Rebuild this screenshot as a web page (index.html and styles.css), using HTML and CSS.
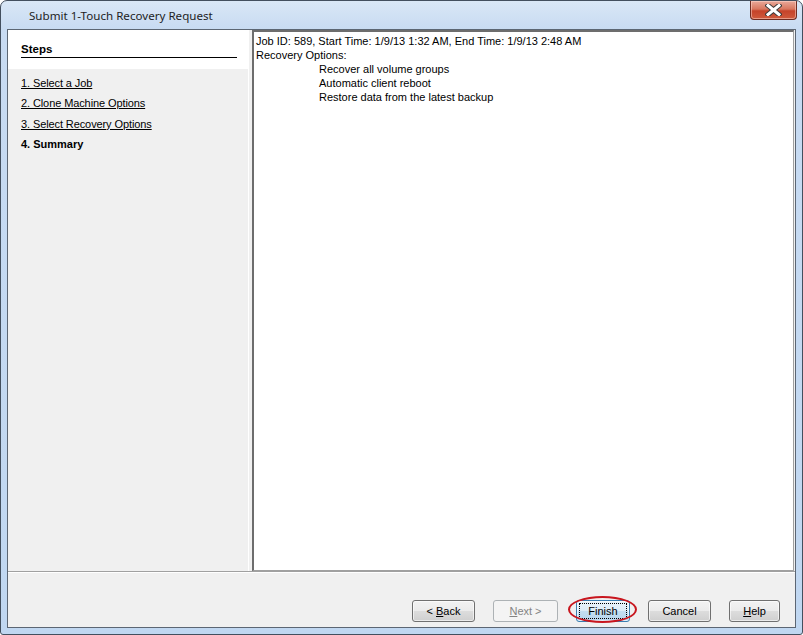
FILE: index.html
```html
<!DOCTYPE html>
<html lang="en">
<head>
  <meta charset="UTF-8">
  <title>Submit 1-Touch Recovery Request</title>
  <link rel="stylesheet" href="styles.css">
</head>
<body>
  <div class="window">
    <div class="titlebar">
      <span class="title">Submit 1-Touch Recovery Request</span>
      <button class="close" title="Close">
        <svg width="17" height="12" viewBox="0 0 17 12">
          <path d="M3 1.5 L14 10.5 M14 1.5 L3 10.5" stroke="#3a3a3a" stroke-width="5" stroke-linecap="square"/>
          <path d="M3 1.5 L14 10.5 M14 1.5 L3 10.5" stroke="#fff" stroke-width="3" stroke-linecap="square"/>
        </svg>
      </button>
    </div>

    <div class="client">
      <div class="main">
        <div class="steps">
          <div class="steps-head">
            <h2>Steps</h2>
          </div>
          <ul class="step-list">
            <li><a href="#">1. Select a Job</a></li>
            <li><a href="#">2. Clone Machine Options</a></li>
            <li><a href="#">3. Select Recovery Options</a></li>
            <li class="current">4. Summary</li>
          </ul>
        </div>
        <div class="splitter"></div>
        <div class="summary">
          <p>Job ID: 589, Start Time: 1/9/13 1:32 AM, End Time: 1/9/13 2:48 AM</p>
          <p>Recovery Options:</p>
          <p class="opt">Recover all volume groups</p>
          <p class="opt">Automatic client reboot</p>
          <p class="opt">Restore data from the latest backup</p>
        </div>
      </div>

      <div class="footer">
        <button class="btn btn-back">&lt; <u>B</u>ack</button>
        <button class="btn btn-next" disabled><u>N</u>ext &gt;</button>
        <span class="marked"><button class="btn btn-finish">Finish</button></span>
        <button class="btn btn-cancel">Cancel</button>
        <button class="btn btn-help"><u>H</u>elp</button>
      </div>
    </div>
  </div>
</body>
</html>
```

FILE: styles.css
```css
body {
  margin: 0;
  background: #fff;
  font-family: "Liberation Sans", Arial, sans-serif;
  font-size: 11px;
  color: #000;
}
.window {
  width: 803px;
  height: 635px;
  box-sizing: border-box;
  border: 1px solid #434f5e;
  border-radius: 7px 7px 3px 3px;
  padding: 0 6px 6px 6px;
  background: linear-gradient(180deg, #d9e7f6 0, #c8dbf2 28px, #c0d7f1 100%);
  display: flex;
  flex-direction: column;
  overflow: hidden;
}
.titlebar {
  height: 28px;
  display: flex;
  align-items: flex-start;
}
.title {
  margin: 7px 0 0 22px;
  font-family: "Noto Sans", "Liberation Sans", sans-serif;
  font-size: 11.6px;
  line-height: 16px;
  color: #1e1e1e;
}
.close {
  margin-left: auto;
  margin-right: -1px;
  width: 47px;
  height: 19px;
  padding: 0;
  border: 1px solid #6e2c22;
  border-top: none;
  border-radius: 0 0 4px 4px;
  background: linear-gradient(180deg, #e9a99a 0, #d8775f 45%, #c5432a 55%, #d05a3c 100%);
  box-shadow: inset 0 0 0 1px rgba(255, 220, 210, 0.5);
  display: flex;
  align-items: center;
  justify-content: center;
}
.client {
  flex: 1;
  border: 1px solid #5c6673;
  background: #f0f0f0;
  display: flex;
  flex-direction: column;
}
.main {
  height: 541px;
  display: flex;
}
.steps {
  width: 240px;
  background: #f0f0f0;
}
.steps-head {
  background: #fff;
  padding: 12px 11px 11px 13px;
}
.steps-head h2 {
  margin: 0;
  font-size: 11.5px;
  font-weight: bold;
  line-height: 15px;
  border-bottom: 1px solid #000;
}
.step-list {
  list-style: none;
  margin: 0;
  padding: 4px 0 0 13px;
  letter-spacing: -0.1px;
}
.step-list li {
  line-height: 20.4px;
}
.step-list a {
  color: #000;
  text-decoration: underline;
}
.step-list .current {
  font-weight: bold;
  letter-spacing: 0;
}
.splitter {
  width: 4px;
  border-left: 1px solid #fff;
  box-sizing: border-box;
}
.summary {
  width: 542px;
  box-sizing: border-box;
  background: #fff;
  border-style: solid;
  border-width: 2px 1px 1px 2px;
  border-color: #6d6d6d #a0a0a0 #a0a0a0 #6d6d6d;
  padding: 2px 2px;
}
.summary p {
  margin: 0;
  line-height: 14px;
  white-space: nowrap;
}
.summary .opt {
  margin-left: 63px;
}
.footer {
  flex: 1;
  border-top: 1px solid #a0a0a0;
  box-shadow: inset 0 1px 0 #fff;
  display: flex;
  justify-content: flex-end;
  align-items: flex-end;
  gap: 18px;
  padding: 0 15px 5px 0;
}
.btn {
  height: 22px;
  padding: 0;
  font-family: "Liberation Sans", Arial, sans-serif;
  font-size: 11px;
  color: #000;
  border: 1px solid #707070;
  border-radius: 3px;
  background: linear-gradient(180deg, #f2f2f2 0, #ebebeb 50%, #dddddd 50%, #cfcfcf 100%);
  box-shadow: inset 0 0 0 1px rgba(255, 255, 255, 0.6);
}
.btn u {
  text-decoration: underline;
}
.btn-back { width: 63px; }
.btn-next { width: 65px; }
.btn-finish { width: 54px; }
.btn-cancel { width: 63px; }
.btn-help { width: 51px; }
.btn:disabled {
  color: #838383;
  border-color: #adb2b5;
  background: #f4f4f4;
  box-shadow: none;
}
.btn-finish {
  border-color: #3c7fb1;
  background: linear-gradient(180deg, #eaf4fb 0, #dcecf8 50%, #c4dff2 50%, #b6d6ee 100%);
  outline: 1px dotted #000;
  outline-offset: -4px;
}
.marked {
  position: relative;
  display: inline-flex;
}
.marked::after {
  content: "";
  position: absolute;
  left: -8px;
  top: -4px;
  width: 65px;
  height: 23px;
  border: 2px solid #c8161e;
  border-radius: 50%;
  pointer-events: none;
}
```
